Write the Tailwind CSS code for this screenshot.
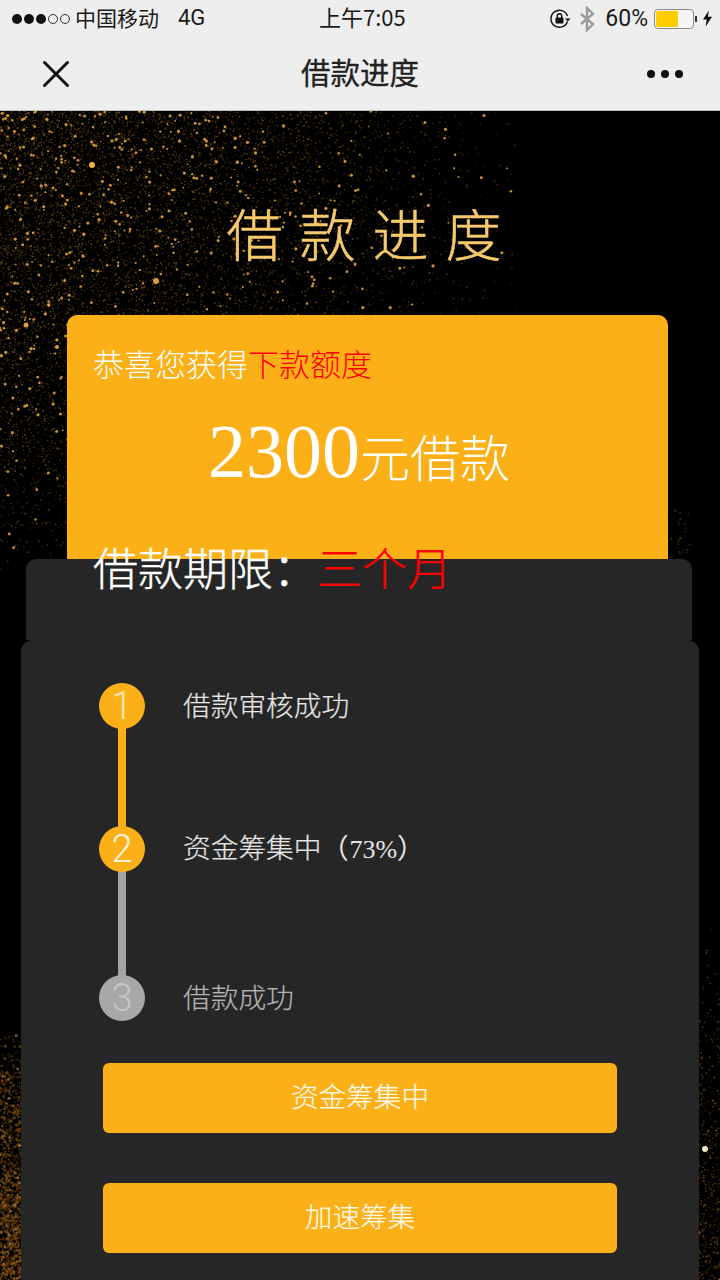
<!DOCTYPE html>
<html lang="zh-CN">
<head>
    <meta charset="UTF-8">
    <meta name="viewport" content="width=device-width, initial-scale=1.0">
    <title>借款进度</title>
    <script src="https://cdn.jsdelivr.net/npm/@tailwindcss/browser@4"></script>
</head>
<body class="bg-black font-['Liberation_Sans','Noto_Sans_CJK_SC',sans-serif]">
<div class="w-[720px] h-[1280px] overflow-hidden flex flex-col">

    <!-- Status + nav -->
    <header class="bg-[#eeeeee] h-[111px] shrink-0 border-b border-[#bdbdbd] text-[#1a1a1a]">
        <div class="h-[37px] flex items-center pl-3 pr-[8px] relative">
            <div class="flex items-center gap-[2px]">
                <span class="w-[10px] h-[10px] rounded-full bg-[#111]"></span>
                <span class="w-[10px] h-[10px] rounded-full bg-[#111]"></span>
                <span class="w-[10px] h-[10px] rounded-full bg-[#111]"></span>
                <span class="w-[10px] h-[10px] rounded-full border border-[#333]"></span>
                <span class="w-[10px] h-[10px] rounded-full border border-[#333]"></span>
            </div>
            <span class="ml-[5px] text-[21px] leading-none -mt-[2px] font-['Noto_Sans_CJK_SC',sans-serif]">中国移动</span>
            <span class="ml-[19px] text-[22px] leading-none -mt-[1px] font-['Roboto',sans-serif]">4G</span>
            <span class="absolute left-[319px] top-[4px] text-[22px] leading-[24px] font-['Noto_Sans_CJK_SC',sans-serif]">上午7:05</span>
            <div class="ml-auto flex items-center">
                <svg class="w-[22px] h-[22px]" viewBox="0 0 22 22" fill="none" stroke="#111" stroke-width="1.400">
                    <path d="M18.500 13.500A8.500 8.500 0 1 1 18.500 8"/>
                    <path d="M21.500 10.500h-5.500l2.800 3z" fill="#111" stroke="none"/>
                    <rect x="6.500" y="9.500" width="8" height="6" rx="1" fill="#111" stroke="none"/>
                    <path d="M8.300 10V8a2.200 2.200 0 0 1 4.400 0v2"/>
                </svg>
                <svg class="w-[16px] h-[26px] ml-[8px]" viewBox="0 0 16 26" fill="none" stroke="#9a9a9a" stroke-width="2.400">
                    <path d="M2 8l12 10-6 6V2l6 6L2 18"/>
                </svg>
                <span class="ml-[10px] text-[23px] leading-none font-['Roboto',sans-serif]">60%</span>
                <div class="ml-[6px] w-[40px] h-[20px] rounded-[4px] border border-[#8a8a8a] p-[1px] bg-[#f5f5f5]">
                    <div class="w-[62%] h-full bg-[#ffcc00] rounded-l-[2px]"></div>
                </div>
                <span class="w-[2px] h-[6px] bg-[#333] ml-[1px]"></span>
                <svg class="w-[9px] h-[17px] ml-[6px]" viewBox="0 0 10 18" fill="#111">
                    <path d="M6.500 0L0 10h4l-1 8 7-11H5.500z"/>
                </svg>
            </div>
        </div>
        <div class="h-[73px] flex items-center justify-between pl-[43px] pr-[37px] relative">
            <svg class="w-[26px] h-[26px]" viewBox="0 0 26 26" stroke="#111" stroke-width="3" stroke-linecap="round">
                <path d="M1.500 1.500l23 23M24.500 1.500l-23 23"/>
            </svg>
            <h1 class="absolute inset-x-0 -mt-[3px] text-center text-[29.500px] leading-none font-['Noto_Sans_CJK_SC',sans-serif] text-[#222] [-webkit-text-stroke:0.3px_#222]">借款进度</h1>
            <div class="flex gap-[6px]">
                <span class="w-[8px] h-[8px] rounded-full bg-[#111]"></span>
                <span class="w-[8px] h-[8px] rounded-full bg-[#111]"></span>
                <span class="w-[8px] h-[8px] rounded-full bg-[#111]"></span>
            </div>
        </div>
    </header>

    <!-- Page -->
    <main class="relative flex-1 bg-black">
        <svg id="glitter" class="absolute inset-0 w-full h-full blur-[0.4px]" viewBox="0 111 720 1169"></svg>

        <div class="relative">
            <h2 class="pt-[88px] h-[204px] text-center text-[56px] leading-[66px] tracking-[17px] indent-[25px] text-[#f6ca6c] font-['Noto_Sans_CJK_SC',sans-serif] font-light [-webkit-text-stroke:0.5px_#f6ca6c]">借款进度</h2>

            <!-- Amount card, text stays above the dark panel -->
            <section class="ml-[67px] mr-[52px] h-[300px] bg-[#fcb017] rounded-t-[10px] pl-[26px] font-['Noto_Sans_CJK_SC',sans-serif] text-white">
                <p class="relative z-10 pt-[28px] text-[31px] leading-[40px] font-light">恭喜您获得<span class="text-[#ff0000]">下款额度</span></p>
                <p class="relative z-10 mt-[33px] pl-[115px] text-[50px] leading-[70px] font-light flex items-baseline">
                    <span class="text-[76px] font-['Liberation_Serif',serif] font-normal">2300</span>元借款
                </p>
                <p class="relative z-10 mt-[49px] text-[45px] leading-[56px] font-light [-webkit-text-stroke:0.4px_#ffffff]">借款期限：<span class="text-[#ff0000] ml-[-1px] [-webkit-text-stroke:0.2px_#ff0000]">三个月</span></p>
            </section>

            <div class="relative -mt-[56px]">
                <div class="ml-[26px] mr-[28px] h-[81px] bg-[#262626] rounded-t-[10px]"></div>
                <section class="ml-[21px] mr-[21px] h-[640px] bg-[#262626] rounded-t-[12px] font-['Noto_Sans_CJK_SC',sans-serif]">
                    <ol class="relative pl-[78px] pt-[43px]">
                        <li class="relative flex items-center h-[46px] text-[27.700px] text-[#e6e6e6]">
                            <span class="relative z-10 w-[46px] h-[46px] rounded-full bg-[#fcb017] flex items-center justify-center text-[38px] font-['Roboto',sans-serif] font-light text-[#fde7b8]">1</span>
                            <span class="ml-[38px] font-light -mt-[3px] [-webkit-text-stroke:0.2px_#e6e6e6]">借款审核成功</span>
                            <span class="absolute left-[19px] top-[44px] w-[8px] h-[100px] bg-[#fcb017]"></span>
                        </li>
                        <li class="relative flex items-center h-[46px] mt-[97px] text-[27.700px] text-[#e6e6e6]">
                            <span class="relative z-10 w-[46px] h-[46px] rounded-full bg-[#fcb017] flex items-center justify-center text-[38px] font-['Roboto',sans-serif] font-light text-[#fff3dc]">2</span>
                            <span class="ml-[38px] font-light -mt-[3px] [-webkit-text-stroke:0.2px_#e6e6e6]">资金筹集中<span class="font-['Liberation_Serif',serif] [-webkit-text-stroke:0]">（<span class="text-[26px]">73%</span>）</span></span>
                            <span class="absolute left-[19px] top-[44px] w-[8px] h-[106px] bg-[#a3a3a3]"></span>
                        </li>
                        <li class="relative flex items-center h-[46px] mt-[103px] text-[27.700px] text-[#b4b4b4]">
                            <span class="relative z-10 w-[46px] h-[46px] rounded-full bg-[#a8a8a8] flex items-center justify-center text-[38px] font-['Roboto',sans-serif] font-light text-[#c9c4c4]">3</span>
                            <span class="ml-[38px] font-light -mt-[3px] [-webkit-text-stroke:0.2px_#b4b4b4]">借款成功</span>
                        </li>
                    </ol>
                    <div class="ml-[82px] mr-[82px] mt-[42px] flex flex-col gap-[50px]">
                        <button class="h-[70px] pb-[4px] rounded-[6px] bg-[#fcb017] text-[27.600px] font-light text-[#fff8e6] [-webkit-text-stroke:0.2px_#fff8e6]">资金筹集中</button>
                        <button class="h-[70px] pb-[4px] rounded-[6px] bg-[#fcb017] text-[27.600px] font-light text-[#fff8e6] [-webkit-text-stroke:0.2px_#fff8e6]">加速筹集</button>
                    </div>
                </section>
            </div>
        </div>
    </main>
</div>

<script>
    // gold dust behind the page, fixed seed so each run looks the same
    let seed = 7305;
    function rnd() {
        seed = (seed * 16807) % 2147483647;
        return seed / 2147483647;
    }
    const svg = document.getElementById("glitter");
    const ns = "http://www.w3.org/2000/svg";
    function dot(x, y, r, o, color) {
        const c = document.createElementNS(ns, "circle");
        c.setAttribute("cx", x);
        c.setAttribute("cy", y);
        c.setAttribute("r", r);
        c.setAttribute("fill", color);
        c.setAttribute("opacity", o);
        svg.appendChild(c);
    }
    // upper left cloud, thins out to the right and downwards
    for (let i = 0; i < 50000; i++) {
        const x = rnd() * 530;
        const y = 111 + rnd() * 470;
        const keep = Math.pow(1 - x / 530, 1.3) * Math.pow(1 - (y - 111) / 470, 0.9);
        if (rnd() > keep) continue;
        const big = rnd() < 0.05;
        dot(x, y, big ? 0.9 + rnd() * 0.8 : 0.5 + rnd() * 0.4, big ? 0.85 : 0.15 + rnd() * 0.35, big ? "#eba93c" : "#c98a2c");
    }
    dot(92, 165, 3, 1, "#f2b040");
    dot(156, 281, 3, 0.9, "#f2b040");
    dot(26, 325, 2.500, 0.9, "#f2b040");
    dot(57, 347, 2, 0.9, "#f2b040");
    // bit of dust right of the card
    for (let i = 0; i < 30; i++) {
        dot(670 + rnd() * 20, 510 + rnd() * 50, 0.6 + rnd() * 0.5, 0.35, "#a86a18");
    }
    // lower left, brown and dense
    for (let i = 0; i < 1300; i++) {
        const y = 1030 + Math.pow(rnd(), 0.6) * 250;
        dot(rnd() * 22, y, 0.6 + rnd() * 0.9, 0.2 + rnd() * 0.4, rnd() < 0.1 ? "#d8a868" : "#8f5810");
    }
    // lower right, sparse until near the bottom
    for (let i = 0; i < 450; i++) {
        const y = 910 + Math.pow(rnd(), 0.45) * 370;
        dot(698 + rnd() * 22, y, 0.4 + rnd() * 0.7, 0.2 + rnd() * 0.4, "#a86a18");
    }
    dot(705, 1149, 3, 1, "#f6e6c8");
</script>
</body>
</html>
